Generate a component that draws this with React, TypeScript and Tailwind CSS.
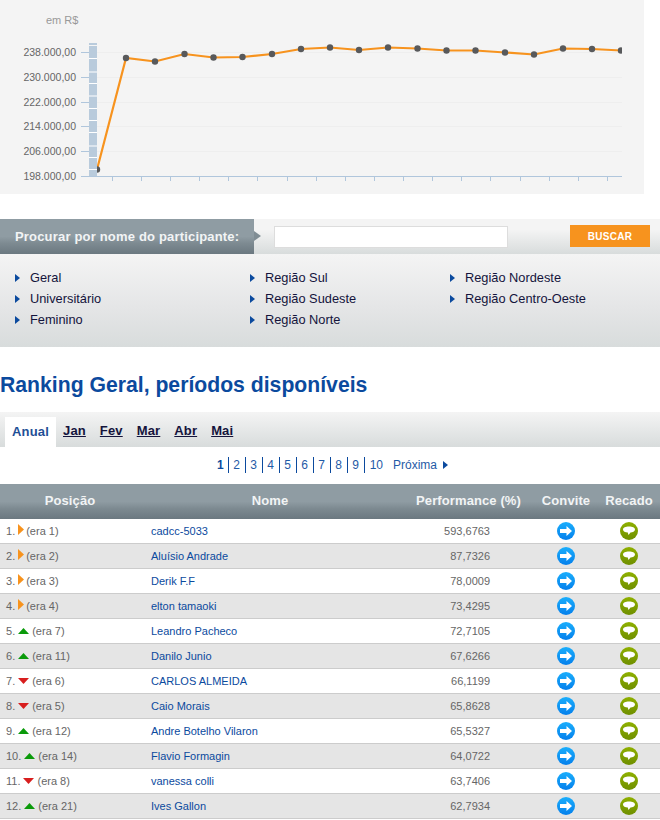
const points = [
  [97, 169.5], [126, 58], [155, 61.5], [184.5, 54], [213.5, 57.5], [242.5, 57], [272, 54], [301, 49], [330, 47.5], [359, 50],
  [388, 47.5], [417.5, 48.5], [446.5, 50.5], [475.5, 50.5], [505, 52.5], [534, 54.5], [563, 48.5], [592, 49], [621, 50.5],
];
const yLabels = [
  { y: 52, label: "238.000,00" },
  { y: 77, label: "230.000,00" },
  { y: 102, label: "222.000,00" },
  { y: 126, label: "214.000,00" },
  { y: 151, label: "206.000,00" },
  { y: 176, label: "198.000,00" },
];
const barGaps = [58, 71.5, 83, 95.5, 108, 120, 132, 145.5, 157, 169];

const regions = [
  { label: "Geral", col: 0 },
  { label: "Universitário", col: 0 },
  { label: "Feminino", col: 0 },
  { label: "Região Sul", col: 1 },
  { label: "Região Sudeste", col: 1 },
  { label: "Região Norte", col: 1 },
  { label: "Região Nordeste", col: 2 },
  { label: "Região Centro-Oeste", col: 2 },
];

const tabs = ["Jan", "Fev", "Mar", "Abr", "Mai"];
const pages = ["2", "3", "4", "5", "6", "7", "8", "9"];

type Trend = "same" | "up" | "down";
const rows: { pos: number; trend: Trend; era: number; name: string; perf: string }[] = [
  { pos: 1, trend: "same", era: 1, name: "cadcc-5033", perf: "593,6763" },
  { pos: 2, trend: "same", era: 2, name: "Aluísio Andrade", perf: "87,7326" },
  { pos: 3, trend: "same", era: 3, name: "Derik F.F", perf: "78,0009" },
  { pos: 4, trend: "same", era: 4, name: "elton tamaoki", perf: "73,4295" },
  { pos: 5, trend: "up", era: 7, name: "Leandro Pacheco", perf: "72,7105" },
  { pos: 6, trend: "up", era: 11, name: "Danilo Junio", perf: "67,6266" },
  { pos: 7, trend: "down", era: 6, name: "CARLOS ALMEIDA", perf: "66,1199" },
  { pos: 8, trend: "down", era: 5, name: "Caio Morais", perf: "65,8628" },
  { pos: 9, trend: "up", era: 12, name: "Andre Botelho Vilaron", perf: "65,5327" },
  { pos: 10, trend: "up", era: 14, name: "Flavio Formagin", perf: "64,0722" },
  { pos: 11, trend: "down", era: 8, name: "vanessa colli", perf: "63,7406" },
  { pos: 12, trend: "up", era: 21, name: "Ives Gallon", perf: "62,7934" },
];

function Chart() {
  return (
    <svg width="644" height="194" viewBox="0 0 644 194" className="block bg-[#f4f4f4]">
      <defs>
        <clipPath id="plot">
          <rect x="97" y="0" width="525" height="194" />
        </clipPath>
      </defs>
      <text x="46" y="24" fontSize="11" fill="#999">em R$</text>
      {yLabels.slice(0, 5).map((l) => (
        <line key={l.y} x1="97" x2="622" y1={l.y + 0.5} y2={l.y + 0.5} stroke="#eeeeee" />
      ))}
      <rect x="89" y="43" width="8" height="133" fill="#b9cbdc" />
      <rect x="89" y="45" width="8" height="1" fill="#f4f4f4" />
      {barGaps.map((y) => (
        <rect key={y} x="89" y={y} width="8" height="1" fill="#ffffff" />
      ))}
      {yLabels.map((l) => (
        <g key={l.label}>
          <line x1="81" x2="89" y1={l.y + 0.5} y2={l.y + 0.5} stroke="#b0c6dc" />
          <text x="76" y={l.y + 3.5} fontSize="10.5" fill="#666" textAnchor="end">{l.label}</text>
        </g>
      ))}
      <line x1="81" x2="622" y1="176.5" y2="176.5" stroke="#b0c6dc" />
      {points.slice(0, -1).map(([x]) => (
        <line key={x} x1={Math.round(x + 14.5) + 0.5} x2={Math.round(x + 14.5) + 0.5} y1="177" y2="181" stroke="#b0c6dc" />
      ))}
      <g clipPath="url(#plot)">
        <polyline points={points.map((p) => p.join(",")).join(" ")} fill="none" stroke="#f7931e" strokeWidth="2.2" />
        {points.map(([x, y]) => (
          <circle key={x} cx={x} cy={y} r="3.2" fill="#58595b" />
        ))}
      </g>
    </svg>
  );
}

function TrendIcon({ trend }: { trend: Trend }) {
  if (trend === "same") {
    return (
      <svg width="6" height="11" viewBox="0 0 6 11" className="ml-[3px] mr-[2px] mt-[-3px]">
        <path d="M0 0 L6 5.5 L0 11 Z" fill="#f7931e" />
      </svg>
    );
  }
  return (
    <svg width="11" height="6" viewBox="0 0 11 6" className="ml-[3px] mr-[3px]">
      {trend === "up" ? <path d="M5.5 0 L11 6 L0 6 Z" fill="#0a9a0a" /> : <path d="M0 0 L11 0 L5.5 6 Z" fill="#d81e1e" />}
    </svg>
  );
}

function InviteIcon() {
  return (
    <svg width="18" height="18" viewBox="0 0 18 18">
      <defs>
        <linearGradient id="invite" x1="0" y1="0" x2="0" y2="1">
          <stop offset="0" stopColor="#1aaefc" />
          <stop offset="1" stopColor="#0580ec" />
        </linearGradient>
      </defs>
      <circle cx="9" cy="9" r="9" fill="url(#invite)" />
      <path d="M3 7 H9.5 V4 L15 9 L9.5 14 V11 H3 Z" fill="#ffffff" />
    </svg>
  );
}

function MessageIcon() {
  return (
    <svg width="18" height="18" viewBox="0 0 18 18">
      <defs>
        <linearGradient id="message" x1="0" y1="0" x2="0" y2="1">
          <stop offset="0" stopColor="#8fb000" />
          <stop offset="1" stopColor="#6f8f00" />
        </linearGradient>
      </defs>
      <circle cx="9" cy="9" r="9" fill="url(#message)" />
      <path d="M9 4.5 C12.5 4.5 15 5.6 15 7.5 C15 9.3 12.5 10.5 10.5 10.6 L8.5 13 L7.8 10.6 C5.2 10.4 3 9.3 3 7.5 C3 5.6 5.5 4.5 9 4.5 Z" fill="#ffffff" />
    </svg>
  );
}

export default function App() {
  return (
    <div className="w-[660px] h-[820px] overflow-hidden bg-white font-['Liberation_Sans',Arial,sans-serif]">
      <Chart />

      {/* busca */}
      <div className="mt-[25px] h-[35px] flex items-start bg-[linear-gradient(#f4f4f4_30%,#d8dcdc)]">
        <div className="relative w-[254px] h-[35px] pl-[15px] flex items-center text-[13px] tracking-[0.18px] font-bold text-[#f2f4f5] bg-[linear-gradient(#8f9ca3_0,#8f9ca3_50%,#7d8a91_70%,#6b7880_100%)]">
          Procurar por nome do participante:
          <div className="absolute left-full top-[12px] border-y-[5px] border-l-[7px] border-y-transparent border-l-[#808d94]" />
        </div>
        <input className="ml-[20px] mt-[7px] w-[234px] h-[22px] bg-white border border-[#dddddd]" />
        <button className="ml-[62px] mt-[6px] w-[80px] h-[22px] bg-[#f7931e] text-white text-[10px] font-bold tracking-[0.3px]">BUSCAR</button>
      </div>

      <div className="h-[93px] pt-[13px] flex bg-[linear-gradient(#f4f4f4,#e4e5e6_60%,#d8dcdc)]">
        {[0, 1, 2].map((col) => (
          <ul key={col} className={col === 0 ? "w-[250px] pl-[15px]" : col === 1 ? "w-[200px] pl-0" : "pl-0"}>
            {regions.filter((r) => r.col === col).map((r) => (
              <li key={r.label} className="h-[21px] flex items-center text-[12.8px] text-[#14143c]">
                <span className="w-0 h-0 border-y-[4px] border-l-[5px] border-y-transparent border-l-[#0b4a9e] mr-[10px]" />
                {r.label}
              </li>
            ))}
          </ul>
        ))}
      </div>

      <h1 className="mt-[25px] h-[26px] text-[21.2px] leading-[26px] font-bold text-[#0b4a9e]">Ranking Geral, períodos disponíveis</h1>

      {/* abas */}
      <div className="mt-[14px] h-[35px] flex items-end pl-[5px] bg-[linear-gradient(#f4f4f4,#d8dcdc)]">
        <div className="w-[51px] h-[30px] pb-px bg-white flex items-center justify-center text-[13px] tracking-[0.15px] font-bold text-[#1f4f96]">Anual</div>
        {tabs.map((t) => (
          <a key={t} className="h-[30px] pb-[3px] ml-[7px] mr-[7px] flex items-center text-[13px] tracking-[0.15px] font-bold underline text-[#14143c]">{t}</a>
        ))}
      </div>

      {/* paginacao */}
      <div className="mt-[9px] h-[18px] pl-[5px] flex items-center justify-center text-xs text-[#1f5aa6]">
        <b className="pr-[4px] border-r border-[#0b4a9e] text-[#0b4a9e]">1</b>
        {pages.map((p) => (
          <span key={p} className="w-[17px] text-center border-r border-[#0b4a9e]">{p}</span>
        ))}
        <span className="pl-[5px]">10</span>
        <span className="ml-[10px] mr-[6px]">Próxima</span>
        <span className="w-0 h-0 border-y-[4px] border-l-[5px] border-y-transparent border-l-[#0b4a9e]" />
      </div>

      {/* tabela */}
      <div className="mt-[10px] h-[35px] pb-px flex items-center text-[13px] tracking-[0.1px] font-bold text-[#f2f4f5] bg-[linear-gradient(#8f9ca3_0,#8f9ca3_50%,#7d8a91_70%,#6b7880_100%)]">
        <div className="w-[140px] text-center">Posição</div>
        <div className="w-[260px] text-center">Nome</div>
        <div className="w-[137px] text-center">Performance (%)</div>
        <div className="w-[58px] text-center">Convite</div>
        <div className="w-[65px] pl-[3px] text-center">Recado</div>
      </div>
      {rows.map((r, i) => (
        <div key={r.pos} className={`h-[25px] flex items-center border-b border-[#cccccc] text-[11px] text-[#666666] ${i % 2 ? "bg-[#e5e5e5]" : "bg-white"}`}>
          <div className="w-[151px] pl-[6px] flex items-center">
            {r.pos}.<TrendIcon trend={r.trend} />(era {r.era})
          </div>
          <div className="w-[249px] text-[#0b4a9e]">{r.name}</div>
          <div className="w-[90px] text-right">{r.perf}</div>
          <div className="w-[85px] pl-[67px] flex items-center"><InviteIcon /></div>
          <div className="pl-[45px] flex items-center"><MessageIcon /></div>
        </div>
      ))}
    </div>
  );
}
